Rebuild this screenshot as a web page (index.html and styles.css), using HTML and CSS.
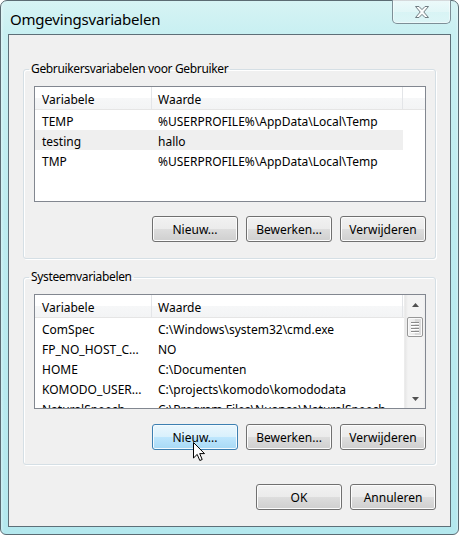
FILE: index.html
```html
<!DOCTYPE html>
<html lang="nl">
<head>
<meta charset="utf-8">
<title>Omgevingsvariabelen</title>
<link rel="stylesheet" href="styles.css">
</head>
<body>
<div class="window">
  <div class="titlebar">
    <span class="title">Omgevingsvariabelen</span>
    <button class="close" aria-label="Sluiten">
      <svg width="16" height="12" viewBox="0 0 16 12">
        <path d="M1.5 0.5 H5 L8 3.6 L11 0.5 H14.5 L9.8 6 L14.5 11.5 H11 L8 8.4 L5 11.5 H1.5 L6.2 6 Z" fill="#fbfdfd" stroke="#6f7c82" stroke-width="1" stroke-linejoin="round"/>
      </svg>
    </button>
  </div>
  <div class="client">
    <fieldset class="group">
      <legend>Gebruikersvariabelen voor Gebruiker</legend>
      <div class="list">
        <div class="list-head">
          <div class="col c1">Variabele</div>
          <div class="col c2">Waarde</div>
          <div class="col c3"></div>
        </div>
        <div class="list-body">
          <div class="row"><div class="c1">TEMP</div><div class="c2">%USERPROFILE%\AppData\Local\Temp</div></div>
          <div class="row sel"><div class="c1">testing</div><div class="c2">hallo</div></div>
          <div class="row"><div class="c1">TMP</div><div class="c2">%USERPROFILE%\AppData\Local\Temp</div></div>
        </div>
      </div>
      <div class="buttons">
        <button class="btn">Nieuw...</button>
        <button class="btn">Bewerken...</button>
        <button class="btn">Verwijderen</button>
      </div>
    </fieldset>
    <fieldset class="group group2">
      <legend>Systeemvariabelen</legend>
      <div class="list list2">
        <div class="list-main">
          <div class="list-head">
            <div class="col c1">Variabele</div>
            <div class="col c2">Waarde</div>
          </div>
          <div class="list-body">
            <div class="row"><div class="c1">ComSpec</div><div class="c2">C:\Windows\system32\cmd.exe</div></div>
            <div class="row"><div class="c1">FP_NO_HOST_C...</div><div class="c2">NO</div></div>
            <div class="row"><div class="c1">HOME</div><div class="c2">C:\Documenten</div></div>
            <div class="row"><div class="c1">KOMODO_USER...</div><div class="c2">C:\projects\komodo\komododata</div></div>
            <div class="row"><div class="c1">NaturalSpeech</div><div class="c2">C:\Program Files\Nuance\NaturalSpeech</div></div>
          </div>
        </div>
        <div class="scrollbar">
          <div class="sb-arrow">
            <svg width="7" height="4" viewBox="0 0 7 4"><path d="M0 4 L3.5 0 L7 4 Z" fill="#505050"/></svg>
          </div>
          <div class="sb-track">
            <div class="sb-thumb">
              <span></span><span></span><span></span><span></span>
            </div>
          </div>
          <div class="sb-arrow">
            <svg width="7" height="4" viewBox="0 0 7 4"><path d="M0 0 L3.5 4 L7 0 Z" fill="#505050"/></svg>
          </div>
        </div>
      </div>
      <div class="buttons">
        <button class="btn hover">Nieuw...</button>
        <button class="btn">Bewerken...</button>
        <button class="btn">Verwijderen</button>
      </div>
    </fieldset>
    <div class="buttons dialog-buttons">
      <button class="btn">OK</button>
      <button class="btn">Annuleren</button>
    </div>
  </div>
  <svg class="cursor" width="13" height="20" viewBox="0 0 13 20">
    <path d="M0.5 0.5 V16 L4.2 12.4 L6.8 18.5 L9.2 17.5 L6.7 11.6 H11.5 Z" fill="#ffffff" stroke="#000000" stroke-width="1" stroke-linejoin="miter"/>
  </svg>
</div>
</body>
</html>
```

FILE: styles.css
```css
* { box-sizing: border-box; }

html, body {
  margin: 0;
  padding: 0;
  width: 459px;
  height: 535px;
  overflow: hidden;
  background: #ffffff;
}

.window {
  position: relative;
  width: 459px;
  height: 535px;
  border: 1px solid #5b6b73;
  border-radius: 7px 7px 6px 6px;
  padding: 0 7px 7px 7px;
  display: flex;
  flex-direction: column;
  background:
    linear-gradient(90deg, rgba(255,255,255,0.35) 0, rgba(255,255,255,0) 3px, rgba(255,255,255,0) 455px, rgba(255,255,255,0.3) 457px),
    linear-gradient(180deg, #d6f3f4 0%, #c9f0f2 6%, #bdecf0 40%, #b4e8ee 100%);
  font-family: "Noto Sans", "Open Sans", sans-serif;
  font-size: 12px;
  color: #000;
}

.titlebar {
  height: 33px;
  display: flex;
  align-items: flex-start;
  justify-content: space-between;
}

.title {
  font-size: 15px;
  line-height: 20px;
  padding: 8px 0 0 2px;
  letter-spacing: -0.2px;
  color: #000;
}

.close {
  width: 59px;
  height: 24px;
  margin: -1px 0 0 0;
  padding: 0;
  border: 1px solid #7d8f97;
  border-top: none;
  border-radius: 0 0 5px 5px;
  background: linear-gradient(180deg, rgba(255,255,255,0.55) 0%, rgba(255,255,255,0.35) 50%, rgba(255,255,255,0.15) 51%, rgba(255,255,255,0.3) 100%);
  box-shadow: inset 0 0 0 1px rgba(255,255,255,0.45);
  display: flex;
  align-items: center;
  justify-content: center;
}

.client {
  flex: 1;
  border: 1px solid #5e6f78;
  background: #f0f0f0;
  padding: 27px 14px 0 14px;
  display: flex;
  flex-direction: column;
}

.group {
  margin: 0;
  padding: 0 9px 16px 10px;
  border: 1px solid #d5dfe5;
  border-radius: 3px;
  box-shadow: inset 1px 1px 0 #ffffff, 1px 1px 0 #ffffff;
  min-width: 0;
}

.group legend {
  padding: 0 2px;
  margin-left: -5px;
  line-height: 14px;
  height: 14px;
  font-size: 12px;
  letter-spacing: -0.35px;
  color: #000;
}

.group2 {
  margin-top: 11px;
  padding-bottom: 14px;
}

.list {
  margin-top: 10px;
  height: 116px;
  border: 1px solid #828790;
  background: #ffffff;
  overflow: hidden;
  display: flex;
}

.list2 {
  height: 115px;
}

.list-main {
  flex: 1;
  min-width: 0;
}

.list:not(.list2) {
  flex-direction: column;
}

.list-head {
  display: flex;
  height: 23px;
  border-bottom: 1px solid #e5e5e5;
  background: linear-gradient(180deg, #ffffff 0%, #ffffff 50%, #f6f7f8 51%, #f3f4f5 100%);
}

.list-head .col {
  height: 22px;
  line-height: 20px;
  padding-top: 3px;
  border-right: 1px solid #e3e5e8;
  white-space: nowrap;
}

.list-head .c3 {
  border-right: none;
  flex: 1;
}

.c1 {
  width: 117px;
  flex: none;
  padding-left: 7px;
  white-space: nowrap;
  overflow: hidden;
}

.c2 {
  width: 251px;
  flex: none;
  padding-left: 6px;
  white-space: nowrap;
  overflow: hidden;
}

.row {
  display: flex;
  height: 20px;
  line-height: 20px;
  width: 368px;
}

.row > div {
  padding-top: 2px;
  height: 20px;
}

.row.sel {
  background: #efefef;
}

.scrollbar {
  width: 21px;
  flex: none;
  display: flex;
  flex-direction: column;
  background: linear-gradient(90deg, #e6e6e6 0, #f3f3f3 3px, #f3f3f3 18px, #eaeaea 21px);
  border-left: 1px solid #ececec;
}

.sb-arrow {
  height: 19px;
  display: flex;
  align-items: center;
  justify-content: center;
}

.sb-track {
  flex: 1;
  padding: 3px 2px 0 2px;
}

.sb-thumb {
  height: 20px;
  border: 1px solid #979797;
  border-radius: 2px;
  background: linear-gradient(90deg, #f3f3f3 0%, #e8e8e8 50%, #d8d8d8 51%, #dcdcdc 100%);
  box-shadow: inset 0 0 0 1px #fafafa;
  display: flex;
  flex-direction: column;
  align-items: center;
  justify-content: center;
  gap: 2px;
}

.sb-thumb span {
  display: block;
  width: 8px;
  height: 1px;
  background: #8a8a8a;
  box-shadow: 0 1px 0 #ffffff;
}

.buttons {
  display: flex;
  justify-content: flex-end;
  gap: 8px;
  margin-top: 14px;
}

.group2 .buttons {
  margin-top: 15px;
}

.btn {
  width: 86px;
  height: 26px;
  padding: 1px 0 0 0;
  margin: 0;
  border: 1px solid #707070;
  border-radius: 3px;
  font-family: "Noto Sans", "Open Sans", sans-serif;
  font-size: 12px;
  color: #000;
  background: linear-gradient(180deg, #f2f2f2 0%, #ebebeb 50%, #dddddd 51%, #cfcfcf 100%);
  box-shadow: inset 0 0 0 1px #fcfcfc;
}

.btn.hover {
  border-color: #3c7fb1;
  background: linear-gradient(180deg, #eaf6fd 0%, #d9f0fc 50%, #bee6fd 51%, #a7d9f5 100%);
  box-shadow: inset 0 0 0 1px #f4fbff;
}

.dialog-buttons {
  margin-top: 19px;
}

.cursor {
  position: absolute;
  left: 192px;
  top: 441px;
}
```
